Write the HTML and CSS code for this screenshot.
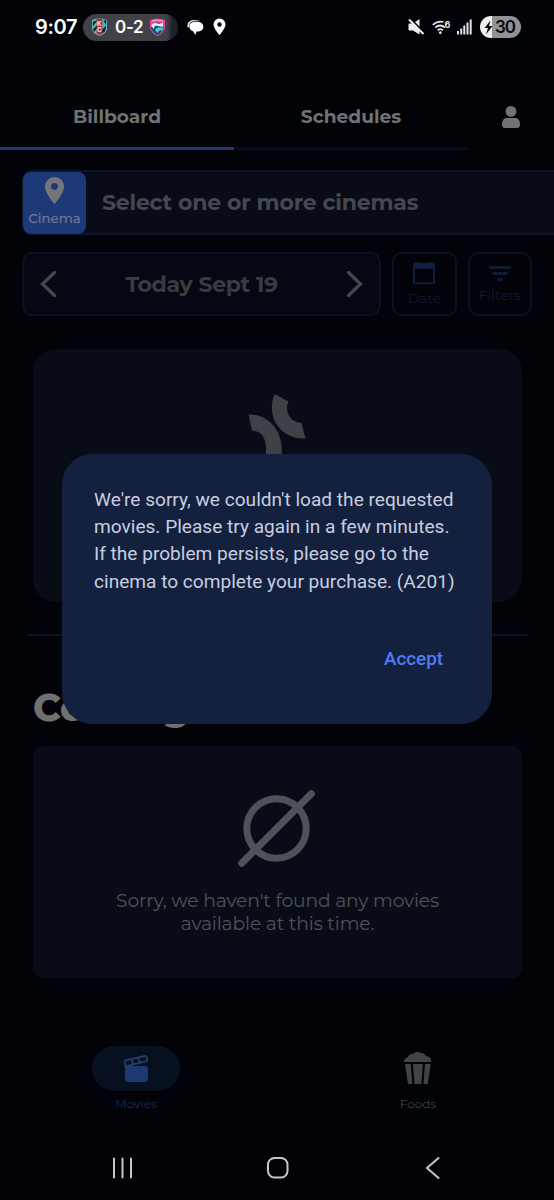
FILE: index.html
```html
<!DOCTYPE html>
<html lang="en">
<head>
<meta charset="utf-8">
<title>Billboard</title>
<link rel="stylesheet" href="styles.css">
</head>
<body>
<div class="phone">
  <header class="status">
    <span class="clock">9:07</span>
    <div class="score">
      <svg width="17" height="18" viewBox="0 0 18 19"><path d="M1 2Q9-1 17 2V11Q17 16 9 19Q1 16 1 11Z" fill="#5bb3b1"/><path d="M2 4L7 2 2 9ZM2 12L7 7 7 10 3 15ZM13 3L16 2 16 7ZM12 12L16 8 15 14 11 17Z" fill="#18232d"/><path d="M6 1H12V16L9 18 6 16Z" fill="#b9283d"/><text x="9" y="8" class="crest-text">K</text><text x="9" y="15" class="crest-text">C</text></svg>
      <span>0-2</span>
      <svg width="17" height="18" viewBox="0 0 17 18"><path d="M1 2Q8.500-1 16 2V10Q15 15 8.500 18Q2 15 1 10Z" fill="#e8459c"/><path d="M2 8Q4 4 9 5Q14 6 15 10Q14 14 8.500 17Q3 14 2 10Z" fill="#174d7b"/><path d="M2 8Q4 3 10 6L14 5V9L9 8Q5 7 5 11Z" fill="#d8eef0"/><path d="M6 12Q8 8 15 10L13 13Q10 11 9 15Z" fill="#54c5c8"/><path d="M3 3Q8 1 14 3" stroke="#ffc1d8" fill="none"/></svg>
    </div>
    <svg class="chat" width="17" height="18" viewBox="0 0 17 18"><path d="M.500 9.500Q-.500 3 6 2Q11 1.500 13 3Q7 2 4 4.200Q2 6 2 9.500Z" fill="#ddd"/><path d="M9 3.700C14 3.700 16.300 5.500 16.300 8.700S14 13.500 9.500 13.500L8.500 17 5.800 13C3.800 12.300 2.500 11 2.500 8.700C2.500 5.500 5 3.700 9 3.700Z" fill="#fff"/></svg>
    <svg class="place" width="13" height="18" viewBox="0 0 13 18"><path fill="#fff" fill-rule="evenodd" d="M6.500.500A6 6 0 0 0 .500 6.500C.500 10.500 6.500 17 6.500 17S12.500 10.500 12.500 6.500A6 6 0 0 0 6.500.500ZM6.500 4.300A2.200 2.200 0 1 1 6.500 8.700A2.200 2.200 0 1 1 6.500 4.300Z"/></svg>
    <span class="grow"></span>
    <svg width="17" height="18" viewBox="0 0 17 18"><path d="M.500 6.500Q.500 5.500 1.500 5.500H5L11.500 1V16.500L5 12.500H1.500Q.500 12.500 .500 11.500Z" fill="#eee"/><path d="M2 .500L17 15.500" stroke="#020308" stroke-width="2"/><path d="M1 1.500L15.500 16" stroke="#eee" stroke-width="1.900"/></svg>
    <svg class="wifi" width="19" height="17" viewBox="0 0 19 17"><g stroke="#e5e5e5" fill="none" stroke-width="1.700"><path d="M.800 6Q5.500 1.500 11.500 3M3.300 8.500Q8 4.500 13 8.500M5.600 11.300Q8.300 9 10.900 11.300"/></g><circle cx="8.300" cy="13.700" r="1.400" fill="#e5e5e5"/><text x="12.500" y="8.500" class="wifi-text">6</text></svg>
    <svg class="signal" width="15" height="16" viewBox="0 0 15 16"><path d="M1 12V15.500M4.200 9.500V15.500M7.300 6.500V15.500M10.500 3.500V15.500M13.700.500V15.500" stroke="#e2e2e2" stroke-width="2"/></svg>
    <div class="battery"><svg width="9" height="15" viewBox="0 0 9 15"><path d="M6.500.500L.500 8H4L2 14.500 8.500 6H5Z" fill="#090a0e"/></svg><span>30</span></div>
  </header>

  <nav class="tabs">
    <div class="tab active"><span>Billboard</span></div>
    <div class="tab"><span>Schedules</span></div>
    <div class="account"><svg width="18" height="22" viewBox="0 0 18 22"><circle cx="9" cy="5.400" r="5.400"/><path d="M4.500 12H13.500C16 12 18 14.500 18 18.500Q18 22 15 22H3Q0 22 0 18.500C0 14.500 2 12 4.500 12Z"/></svg></div>
  </nav>

  <main>
    <div class="cinema-bar">
      <div class="cinema-btn"><svg width="19" height="27" viewBox="0 0 19 27"><path fill="#747677" fill-rule="evenodd" d="M9.500 0A9.500 9.500 0 0 0 0 9.500C0 16.500 9.500 27 9.500 27S19 16.500 19 9.500A9.500 9.500 0 0 0 9.500 0ZM9.500 6A3.400 3.400 0 1 1 9.500 12.800A3.400 3.400 0 1 1 9.500 6Z"/></svg><span>Cinema</span></div>
      <span>Select one or more cinemas</span>
    </div>
    <div class="date-row">
      <div class="day">
        <svg width="17" height="28" viewBox="0 0 17 28"><path d="M14.500 2.500L2.500 14 14.500 25.500"/></svg>
        <span>Today Sept 19</span>
        <svg width="17" height="28" viewBox="0 0 17 28"><path d="M2.500 2.500L14.500 14 2.500 25.500"/></svg>
      </div>
      <div class="tool date"><svg width="22" height="23" viewBox="0 0 22 23"><path fill-rule="evenodd" d="M4 0H6V1H16V0H18V1H20Q22 1 22 3V20Q22 22 20 22H2Q0 22 0 20V3Q0 1 2 1H4ZM2 7V20.500H20V7Z"/></svg><span>Date</span></div>
      <div class="tool filters"><svg width="22" height="16" viewBox="0 0 22 16"><path d="M0 1.500H22M3.500 7.500H18.500M8 13.500H14" stroke-width="2.500"/></svg><span>Filters</span></div>
    </div>
    <section class="card loading">
      <svg width="60" height="76" viewBox="0 0 60 76"><path d="M27.500 0L41.500 7.500C37 18 43.500 28.500 54.500 29L58.500 44.500C35 46 18 24 27.500 0ZM1.500 20.500C22 20 37.500 38 34.500 62L18.500 62C21 45 15 37 5 36.500Z"/></svg>
    </section>
    <hr>
    <h2>Coming soon</h2>
    <section class="card empty">
      <svg width="78" height="78" viewBox="0 0 78 78"><circle cx="38.500" cy="38.500" r="29.700"/><path d="M3.700 73.300L73.300 3.700"/></svg>
      <p><span>Sorry, we haven't found any movies</span><span>available at this time.</span></p>
    </section>
  </main>

  <nav class="bottom">
    <div class="dest movies"><div class="pill"><svg width="26" height="28" viewBox="0 0 26 28"><path d="M2 11H22Q25 11 25 14V24Q25 27 22 27H5Q2 27 2 24Z" fill="#1e3972"/><path d="M2.500 11.500L1.800 7.500Q1.500 5.500 4 5L21 1.200Q23.500 .700 24 3.500V6L4 11ZM8.500 4.500L10 9M15 3L17 7.500" fill="none" stroke="#263961" stroke-width="2"/></svg></div><span>Movies</span></div>
    <div class="dest foods"><div class="pill"><svg width="28" height="33" viewBox="0 0 28 33"><path d="M0 10Q0 6 4 5Q5 2 8 2Q10 2 10 1Q14-1 17 1Q21 1 22 4Q27 4 27.500 10ZM1 12H6.700L8.300 32H4ZM9 12H18.800L17.500 32H10.500ZM21 12H26.800L23.700 32H19.500Z"/></svg></div><span>Foods</span></div>
  </nav>
  <footer class="system">
    <svg width="22" height="22" viewBox="0 0 22 22"><path d="M2 1.500V20.500M10.500 1.500V20.500M19 1.500V20.500"/></svg>
    <svg class="home" width="24" height="24" viewBox="0 0 24 24"><rect x="2" y="2" width="19.500" height="19.500" rx="6.500"/></svg>
    <svg width="16" height="24" viewBox="0 0 16 24"><path d="M13.500 2L2 12 13.500 22"/></svg>
  </footer>

  <div class="dialog" role="alertdialog">
    <p><span>We're sorry, we couldn't load the requested</span><span>movies. Please try again in a few minutes.</span><span>If the problem persists, please go to the</span><span>cinema to complete your purchase. (A201)</span></p>
    <button>Accept</button>
  </div>
</div>
</body>
</html>
```
FILE: styles.css
```css
* { box-sizing: border-box; }
body { margin: 0; background: #020308; font-family: Montserrat, Inter, sans-serif; }
svg { display: block; flex: none; }
span { white-space: nowrap; }
.phone { position: relative; width: 554px; height: 1200px; overflow: hidden; display: flex; flex-direction: column; background: #020308; color: #717273; }

.status { height: 54px; flex: none; display: flex; align-items: center; padding: 0 33px 0 35px; color: #fff; font-family: Inter, sans-serif; }
.clock { width: 48px; font-size: 20px; font-weight: 600; letter-spacing: -.3px; }
.score { width: 95px; height: 27px; border-radius: 14px; display: flex; align-items: center; gap: 7px; padding-left: 8px; background: linear-gradient(90deg, #414248 0 88%, #202127 94%); font-size: 17px; font-weight: 600; }
.score span { width: 27px; text-align: center; letter-spacing: -.3px; }
.crest-text { font: bold 7px Inter, sans-serif; fill: #eee; text-anchor: middle; }
.chat { margin-left: 9px; }
.place { margin-left: 9px; }
.grow { flex: 1; }
.wifi { margin-left: 7px; }
.wifi-text { font: bold 9px Inter, sans-serif; fill: #e5e5e5; }
.signal { margin-left: 6px; }
.battery { margin-left: 8px; width: 41px; height: 22px; border-radius: 11px; background: linear-gradient(90deg, #efefef 0 29%, #929294 29%); color: #07080c; display: flex; align-items: center; gap: 2px; padding-left: 4px; font-size: 17px; font-weight: 600; letter-spacing: -1px; }

.tabs { height: 96px; flex: none; display: flex; font-size: 18.600px; font-weight: 700; }
.tab { width: 234px; display: flex; align-items: center; justify-content: center; padding-top: 32px; border-bottom: 3px solid #070b17; }
.tab.active { border-color: #25376f; }
.account { flex: 1; padding: 52px 0 0 34px; border-bottom: 2px solid #040509; fill: #717273; }

main { height: 828px; flex: none; padding-top: 20px; }
.cinema-bar { height: 65px; margin-left: 22px; display: flex; align-items: center; gap: 16px; border: 2px solid #0c1428; border-left-width: 1px; border-right: 0; border-radius: 10px 0 0 10px; background: #080c18; color: #45484f; font-size: 22px; font-weight: 700; letter-spacing: -.2px; }
.cinema-btn { width: 63px; height: 62px; border-radius: 8px; background: #1e3978; display: flex; flex-direction: column; align-items: center; padding-top: 5px; color: #747a88; font-size: 13.300px; font-weight: 500; letter-spacing: 0; }
.cinema-btn span { line-height: 28px; }
.date-row { display: flex; gap: 11px; margin: 17px 22px 0; height: 64px; }
.day { width: 360px; display: flex; align-items: center; justify-content: space-between; padding: 0 16px; border: 2px solid #0b1122; border-radius: 10px; background: #040812; color: #3a3b3f; font-size: 22px; font-weight: 700; letter-spacing: -.3px; }
.day svg path { fill: none; stroke: #45464a; stroke-width: 3.300; stroke-linecap: round; }
.tool { width: 64.500px; display: flex; flex-direction: column; align-items: center; border: 2px solid #0b1122; border-radius: 10px; color: #0f1b36; fill: #10203f; stroke: none; font-size: 13.700px; }
.date { padding-top: 8px; }
.date span { line-height: 27px; }
.filters { padding-top: 12px; stroke: #13203b; }
.filters span { line-height: 27px; }
.card { width: 489px; margin-left: 33px; background: #080c16; display: flex; flex-direction: column; align-items: center; }
.loading { height: 253px; margin-top: 33px; border-radius: 23px; padding-top: 45px; padding-right: 2px; fill: #3e4246; }
hr { margin: 32px 27px 0; border: 0; height: 2px; background: #0b1223; }
h2 { margin: 45px 0 0 33px; height: 65px; line-height: 54px; font-size: 38px; font-weight: 800; letter-spacing: -.2px; color: #707070; }
.empty { height: 232px; border-radius: 10px; padding-top: 44px; }
.empty svg { margin-right: 2px; fill: none; stroke: #505156; stroke-width: 7; stroke-linecap: round; }
.empty p { margin: 21px 0 0; display: flex; flex-direction: column; align-items: center; font-size: 18.700px; line-height: 23px; letter-spacing: -.15px; color: #505257; }

.bottom { height: 158px; flex: none; display: flex; padding-top: 68px; font-size: 12px; }
.dest { width: 88px; display: flex; flex-direction: column; align-items: center; }
.movies { margin-left: 92px; color: #172b57; }
.foods { margin-left: 194px; color: #404144; fill: #404347; }
.pill { width: 88px; height: 45px; border-radius: 23px; display: grid; place-items: center; flex: none; }
.movies .pill { background: #07101f; }
.dest > span { line-height: 26px; }
.system { height: 64px; flex: none; display: flex; align-items: center; justify-content: space-between; padding: 0 113px 0 112px; fill: none; stroke: #c8c8c8; stroke-width: 2; stroke-linecap: round; }
.home { margin-right: 4px; }

.dialog { position: absolute; left: 62px; top: 454px; width: 430px; height: 269.500px; border-radius: 31px; background: #14213e; padding: 32px 32px 0; font-family: Roboto, sans-serif; color: #c7cee0; }
.dialog p { margin: 0; font-size: 19.100px; line-height: 27.200px; display: flex; flex-direction: column; align-items: flex-start; }
.dialog button { display: block; margin: 52px 17px 0 auto; padding: 0; border: 0; background: none; color: #4d7df5; font: 500 18.800px/25px Roboto, sans-serif; }
```
